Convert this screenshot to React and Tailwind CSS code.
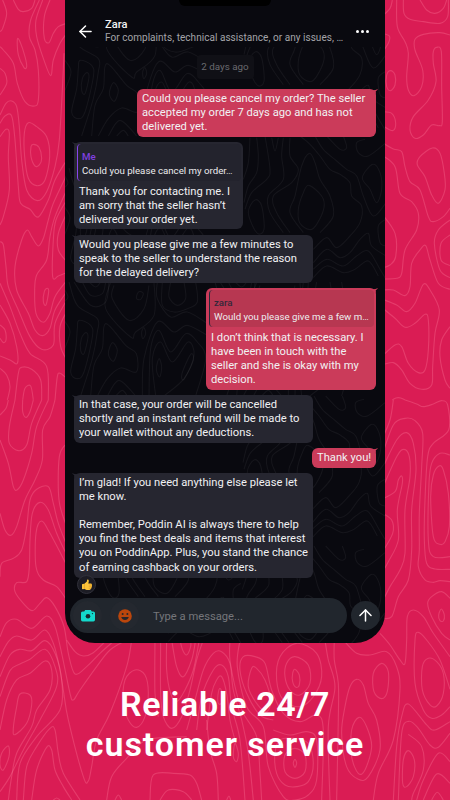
import { ArrowLeft, ArrowUp } from "lucide-react";
import clsx from "clsx";

// Contour lines. Every string is a list of points, a trailing z closes the ring.
const LEFT_TOP = [
  "8,0 20,40 8,85 0,95",
  "40,0 55,28 70,35 95,25 105,0",
  "118,0 92,60 88,110 105,150 115,210 115,300 103,318 75,305 52,250 40,190 10,150 0,140",
  "128,0 108,60 110,110 130,175 152,227 160,180 180,130 200,100",
  "150,0 133,50 133,115 147,128 160,100 175,80 200,70",
  "52,118 60,125 75,170 80,200 72,203 55,165 z",
  "0,205 15,220 20,250 0,285",
  "85,368 110,380 140,410 149,470 135,540 110,557 85,535 74,470 73,400 z",
  "100,433 117,442 125,475 118,495 105,498 93,470 93,440 z",
  "0,345 18,310 35,303 50,320 58,380 65,480 80,570 112,602 140,575 165,500 178,420 188,250 192,160",
  "0,370 15,348 35,348 45,420 55,560 62,610 90,628 115,651 145,600 165,540 200,480",
  "0,410 18,388 28,400 25,470 28,570 10,650 0,675",
  "200,525 160,610 145,660 130,715 115,738 95,710 82,690 65,720 45,800 50,870 85,940 105,990 128,1007 150,985 165,930 200,875",
  "200,570 165,650 150,710 140,780 110,825 104,870 108,940 130,967 150,940 165,890 200,842",
  "200,600 168,660 160,720 158,830 175,828 200,818",
  "200,640 175,700 175,750 200,785",
  "0,725 10,735 18,800 25,860 55,930 90,1010 125,1048 160,1035 165,970 200,900",
  "0,850 30,920 60,1000 90,1060 140,1100 145,1200",
  "0,915 30,970 50,1040 52,1090 30,1080 0,1068",
  "0,975 15,990 18,1020 10,1028 0,1015",
  "142,865 146,875 138,915 130,905 133,875 z",
  "45,1200 55,1120 65,1102 95,1108 122,1140 125,1200",
  "68,1200 75,1165 92,1158 100,1200",
  "0,1105 20,1125 30,1160 22,1200",
  "165,1200 172,1130 180,1120 200,1135",
  "200,935 180,980 182,1040 200,1080",
];

const LEFT_BOTTOM = [
  "0,45 18,25 25,0",
  "45,0 28,80 28,130 55,152 80,135 95,70 125,0",
  "68,0 68,35 78,52 90,35 100,0",
  "0,120 25,190 40,260 52,269 70,240 95,160 110,80 145,0",
  "165,0 150,50 128,90 127,180 105,240 75,300 50,380 33,406 15,390 0,340",
  "0,530 5,490 40,475 65,450 80,380 90,300 110,268 145,260 160,310 175,370 200,435",
  "200,465 170,400 145,330 120,307 97,340 90,420 88,500 80,545 50,548 45,575 70,610 97,632 120,610 140,593 165,620 192,680 205,760 225,822 260,800 300,760 345,720",
  "200,495 150,400 125,363 108,400 108,500 130,540 170,560 200,600",
  "200,130 178,170 177,300 200,380",
  "0,710 20,668 50,658 95,685 140,648 165,680 185,760 210,880 220,900 240,870 290,800 330,750 380,720",
  "0,770 25,725 50,708 95,720 135,690 160,730 178,800 190,870 205,960 250,1130 265,1143 275,1100 290,1020 330,940 380,800 395,720",
  "0,830 30,765 60,748 95,752 135,722 165,760 185,840 180,930 110,1010 60,1090 50,1200",
  "0,890 30,812 60,792 90,778 135,748 165,800 170,860 120,960 70,1050 30,1130 0,1175",
  "0,990 20,900 50,840 90,820 135,783 155,810 150,870 110,930 95,980 50,1060 35,1130 25,1200",
  "60,882 90,885 95,915 80,970 45,1004 40,985 50,920 z",
  "70,1200 80,1100 110,1040 150,985 165,990 175,1060 190,1120 240,1200",
  "95,1200 110,1110 140,1042 155,1050 165,1110 190,1160 215,1200",
  "25,1038 27,1070 10,1110 0,1095 5,1060 z",
];

const RIGHT_TOP = [
  "5,50 30,25 37,0",
  "50,0 52,80 75,125 85,160 80,230 85,270 102,287 125,260 128,210 105,150 105,118 130,103 180,98 210,105",
  "70,0 72,40 90,58 130,65 180,70 203,50 205,0",
  "120,0 140,30 165,40 190,25 200,0",
  "5,100 28,108 25,130 5,160",
  "32,212 45,225 45,255 32,272 20,260 20,225 z",
  "5,335 35,340 47,370 38,392 5,375",
  "170,142 184,155 185,260 187,365 178,377 155,375 130,405 105,415 90,390 100,350 145,300 168,245 160,190 160,155 z",
  "157,444 180,460 193,520 195,570 175,610 155,585 135,530 112,495 120,470 z",
  "5,427 40,447 65,455 75,500 90,545 120,570 145,650 160,665 190,650 210,625",
  "5,465 45,500 60,580 95,605 115,640 110,690 75,750 65,820 50,835 5,837",
  "5,640 45,700 47,770 30,795 5,805",
  "5,870 40,870 75,887 90,860 95,790 120,750 137,737 150,780 175,850 210,868",
  "210,660 175,690 163,730 180,810 210,833",
  "210,705 183,730 183,780 210,797",
  "5,897 50,915 80,935 105,910 130,853 150,870 178,930 165,1000 158,1100 155,1155 125,1168 90,1150 65,1110 40,1088 5,1095",
  "5,922 45,955 75,982 105,970 135,943 145,960 145,1050 135,1110 115,1118 85,1090 65,1040 45,1035 5,1070",
  "210,980 185,1020 180,1070 195,1140 210,1165",
  "37,1200 48,1194 62,1194 75,1200",
];

const RIGHT_BOTTOM = [
  "5,120 30,60 40,0",
  "75,0 110,12 130,20 160,12 185,2 203,15 206,90 160,130 143,170 135,300 133,420 140,490 165,507 210,508",
  "5,170 40,75 75,55 105,62 128,100 125,200 118,340 118,450 115,500 135,540 160,547 180,542 210,545",
  "5,210 50,120 80,98 100,130 108,210 95,330 95,450 85,540 55,590 35,650 5,655",
  "5,270 50,170 72,148 88,170 90,230 75,330 75,460 60,510 30,560 5,610",
  "5,298 45,275 55,240 65,228 67,250 52,330 55,420 25,485 5,520",
  "5,338 35,360 38,400 5,460",
  "210,165 180,160 155,190 147,250 145,420 160,470 210,470",
  "177,198 190,210 205,280 208,380 195,425 180,433 160,410 152,290 160,225 z",
  "210,595 185,575 155,590 143,610 155,650 185,700 210,720",
  "184,627 193,645 190,663 180,662 176,645 z",
  "0,700 30,735 60,780 75,790 80,720 82,650 100,630 130,650 160,700 210,770",
  "210,868 180,780 140,720 115,697 105,720 105,850 130,930 155,955 185,945 210,920",
  "145,775 170,785 190,820 190,880 170,918 150,915 127,870 127,800 z",
  "210,965 165,990 140,975 85,912 65,950 50,1040 40,1200",
  "210,1000 175,1042 150,1035 115,985 87,964 65,1000 55,1200",
  "85,1003 125,1040 130,1110 100,1180 95,1200",
  "85,1052 103,1080 100,1130 80,1160 68,1150 70,1080 z",
  "210,1085 175,1060 130,1140 110,1200",
  "130,1200 170,1122 210,1150",
  "155,1200 172,1177 190,1200",
];

const FOOT = [
  "200,0 225,35 250,48 280,38 320,0",
  "405,90 435,105 445,160 435,230 410,262 385,240 370,190 375,120 z",
  "465,0 465,160 475,230",
  "482,0 482,160 490,230 515,265 545,230 570,150 590,60 610,0",
  "500,0 500,90 512,160 530,185 555,150 580,90 598,0",
  "515,0 530,80 550,110 575,60 587,0",
  "540,0 548,30 560,45 572,20 572,0",
  "560,270 580,200 610,90 640,40 665,35 690,70 700,150 725,240 745,340 760,480",
  "590,270 605,170 640,90 665,75 685,110 695,200 720,300 735,480",
  "620,270 635,160 650,120 665,110 680,160 690,240 705,300",
  "660,145 668,165 664,190 655,190 654,165 z",
  "690,0 690,60 710,160 730,220 770,290 780,400 785,480",
  "720,0 712,80 740,200 790,260 805,380 850,470 885,480 925,465 950,420 950,300 920,275 870,285 820,270",
  "755,85 770,85 795,120 812,180 800,215 770,190 745,140 z",
  "820,240 780,225 740,160 720,90 730,50 765,50 795,70 815,150 850,220 900,245 950,225 970,270 965,480",
  "885,88 898,105 898,135 888,142 878,125 878,100 z",
  "885,50 925,75 930,130 900,165 870,150 855,110 860,70 z",
  "890,10 950,40 965,110 940,170 900,200 850,180 830,120 840,50 z",
  "975,0 985,60 1005,140 985,260 990,480",
  "1003,0 1003,60 1015,130 1015,240 1010,480",
  "885,358 890,370 885,382 880,370 z",
  "885,325 915,345 915,395 885,415 855,395 855,345 z",
  "840,300 825,340 830,400 855,435 890,440 925,425 940,370 925,310 880,295 z",
  "1070,118 1090,135 1105,190 1130,240 1140,330 1105,410 1075,418 1040,380 1025,280 1035,200 1050,140 z",
  "1077,232 1100,260 1115,320 1095,390 1075,400 1055,350 1055,270 z",
  "1145,70 1165,95 1162,155 1145,176 1122,155 1120,100 z",
  "1030,0 1070,40 1110,45 1160,35 1190,80 1200,150 1180,300 1135,400 1120,480",
  "320,480 335,410 380,355 440,300 560,290",
  "450,480 460,405 520,400 570,405 590,430 605,480",
  "480,480 505,450 550,455 575,480",
  "345,480 355,465 365,480",
  "680,480 687,468 692,480",
  "620,240 630,330 650,400 655,480",
  "705,310 715,340 710,365 700,350 z",
  "160,480 170,474 180,480",
];

const CHAT_A = [
  "207,148 245,180 252,215 230,265 210,281 180,262 175,220 190,170 z",
  "45,192 65,210 72,280 50,290 25,230 z",
  "30,5 25,80 10,130",
  "50,5 55,60 50,110 25,150 12,200",
  "75,0 90,100 80,130 35,170 15,220",
  "95,5 105,45 115,5",
  "130,5 125,60 130,130 85,180 90,230 130,290",
  "150,5 150,60 175,100 155,140 100,180 110,230 150,290",
  "190,290 150,230 165,180 185,90 208,52 225,80 240,130 270,180 280,240 240,290",
  "180,0 210,25 240,60 270,100 300,115 330,140 335,180 365,210 360,260 330,300 290,335 260,305 220,340",
  "225,0 250,40 290,75 320,100 350,120 370,180 400,240 438,200",
  "398,85 420,110 425,160 410,200 390,160 367,125 z",
  "375,10 350,20 355,50 385,60 438,20",
  "260,0 300,40 320,35 310,0",
  "438,250 415,270 420,320 438,330",
  "220,380 260,340 300,365 330,350 360,310 385,292 395,330 438,360",
  "220,400 260,370 310,390 350,360 385,345 420,400 438,430",
  "220,425 260,390 310,410 345,400 385,375 415,420",
];

const CHAT_B = [
  "150,10 145,50 195,115 240,80 255,10",
  "228,28 238,35 230,52 218,50 220,35 z",
  "280,0 280,50 320,105 370,90 438,130",
  "320,0 315,45 340,70 365,50 360,0",
  "295,0 295,70 330,90 370,80 400,60 395,0",
  "75,0 95,15 110,0",
  "55,0 80,40 115,35 125,0",
  "30,0 80,70 125,60 135,0",
  "15,0 40,70 100,110 100,150 85,230 50,342",
  "45,115 80,130 85,165 60,270 40,290 20,270 35,200 40,140 z",
  "65,152 72,165 60,215 50,205 52,170 z",
  "145,182 160,205 148,238 133,215 z",
  "80,342 90,250 115,200 125,125 185,190 217,215 217,270 170,258 130,290 100,342",
  "240,137 245,155 236,170 233,150 z",
  "140,0 125,80 200,165 215,150 270,100 270,0",
  "235,342 240,230 280,120 330,150 370,130 430,160",
  "255,342 260,200 285,145 320,210 365,155 400,180 425,230 395,342",
  "275,342 265,230 290,180 325,240 372,180 390,220 360,290 300,342",
  "285,230 293,255 287,285 277,262 z",
  "380,217 388,235 360,292 354,275 z",
  "130,342 165,295 215,342",
  "155,342 175,325 190,342",
  "0,115 18,150 0,205",
  "0,20 12,45 0,60",
];

// Smooth curve through the points (Catmull-Rom to bezier)
function toPath(line) {
  const closed = line.endsWith("z");
  const pts = line
    .replace(" z", "")
    .split(" ")
    .map((p) => p.split(",").map(Number));
  const n = pts.length;
  const at = (i) =>
    closed ? pts[(i + n) % n] : pts[Math.max(0, Math.min(n - 1, i))];

  let d = `M${pts[0]}`;
  for (let i = 0; i < (closed ? n : n - 1); i++) {
    const [a, b, c, e] = [at(i - 1), at(i), at(i + 1), at(i + 2)];
    d += `C${b[0] + (c[0] - a[0]) / 6},${b[1] + (c[1] - a[1]) / 6} `;
    d += `${c[0] - (e[0] - b[0]) / 6},${c[1] - (e[1] - b[1]) / 6} ${c}`;
  }
  return d;
}

function Contours({ lines, x, y }) {
  return (
    <g transform={`translate(${x} ${y}) scale(0.3333)`}>
      {lines.map((line) => (
        <path key={line} d={toPath(line)} />
      ))}
    </g>
  );
}

function PageBackground() {
  return (
    <svg
      className="absolute inset-0"
      width="450"
      height="800"
      fill="none"
      stroke="#ff7d9c"
      strokeOpacity="0.32"
      strokeWidth="3.4"
    >
      <Contours lines={LEFT_TOP} x={0} y={0} />
      <Contours lines={LEFT_BOTTOM} x={0} y={400} />
      <Contours lines={RIGHT_TOP} x={380} y={0} />
      <Contours lines={RIGHT_BOTTOM} x={380} y={400} />
      <Contours lines={FOOT} x={0} y={640} />
    </svg>
  );
}

function ChatBackground() {
  return (
    <svg
      className="absolute inset-0"
      width="320"
      height="643"
      fill="none"
      stroke="#ffffff"
      strokeOpacity="0.05"
      strokeWidth="3.4"
    >
      <Contours lines={CHAT_B} x={0} y={22} />
      <Contours lines={CHAT_A} x={175} y={-12} />
      <Contours lines={CHAT_A} x={175} y={136} />
      <Contours lines={CHAT_B} x={-1} y={168} />
      <Contours lines={CHAT_B} x={-1} y={282} />
      <Contours lines={CHAT_B} x={145} y={282} />
      <Contours lines={CHAT_A} x={174} y={396} />
      <Contours lines={CHAT_A} x={30} y={500} />
      <Contours lines={CHAT_A} x={174} y={546} />
    </svg>
  );
}

function Header() {
  return (
    <header className="relative flex h-[47px] items-start bg-[#09090f] pt-[18px]">
      <div className="absolute left-[114px] top-0 h-1.5 w-[92px] rounded-b-[7px] bg-black" />
      <ArrowLeft className="ml-[10.5px] mt-1 text-white" size={19} strokeWidth={1.9} />
      <div className="ml-[10.5px] w-[242px]">
        <p className="text-[11px] leading-[13px] font-medium tracking-[0.1px] text-[#f3f3f4]">
          Zara
        </p>
        <p className="whitespace-nowrap text-[10px] leading-[13px] tracking-[0.04px] text-[#a4a4a8]">
          For complaints, technical assistance, or any issues, …
        </p>
      </div>
      <div className="ml-[9px] mt-3 flex gap-[2px]">
        <span className="size-[3px] rounded-full bg-white" />
        <span className="size-[3px] rounded-full bg-white" />
        <span className="size-[3px] rounded-full bg-white" />
      </div>
    </header>
  );
}

function Quote({ name, text, mine }) {
  return (
    <div
      className={clsx(
        "mb-[4px] -mt-px -ml-[2px] -mr-[2px] h-[37px] rounded-[4px] border-l pl-[4px] pt-[6px] whitespace-nowrap",
        mine ? "border-[#252a3a] bg-[#b73751]" : "border-[#8844ee] bg-[#23232d]"
      )}
    >
      <p
        className={clsx(
          "text-[9.7px] leading-[14px] font-medium",
          mine ? "text-[#33283a]" : "text-[#8040e0]"
        )}
      >
        {name}
      </p>
      <p className="text-[9.7px] leading-[14px] text-[#ececee]">{text}</p>
    </div>
  );
}

function Bubble({ mine, className, children }) {
  return (
    <div
      className={clsx(
        "relative rounded-[6px] pl-[5px] pr-1 pt-[3px] text-[11.2px] leading-[14.1px] whitespace-pre text-[#f1f1f3]",
        mine ? "self-end bg-[#cb3b5a]" : "self-start bg-[#262630]",
        className
      )}
    >
      <svg
        className={clsx("absolute top-0", mine ? "-right-[2px]" : "-left-[2px] -scale-x-100")}
        width="6"
        height="5"
        viewBox="0 0 6 5"
        fill={mine ? "#cb3b5a" : "#262630"}
      >
        <path d="M0 1.2Q3.5 1.3 6 0Q5.2 1.6 3.8 2.3V5Z" />
      </svg>
      {children}
    </div>
  );
}

function ThumbsUp() {
  return (
    <svg width="12" height="12" viewBox="0 0 12 12">
      <path
        d="M1 5.4Q1 5 1.5 5L3.4 4.8 5.9 2.4 6 .9Q6.3.2 7.1.6 8 1.2 7.8 2.5L7.3 4.4H10.1Q11 4.6 10.8 5.5 11.4 6.2 10.8 7 11.2 7.8 10.5 8.4 10.7 9.3 9.9 9.8 9.7 10.9 8.5 10.9H5.6Q4.4 10.7 3.5 10.1L1.5 10.3Q1 10.2 1 9.6Z"
        fill="#fcc43a"
      />
      <path
        d="M7.8 6H10.6M7.8 7.7H10.5M7.7 9.3H9.9M3.4 5V10"
        stroke="#d98a21"
        strokeWidth="0.5"
        fill="none"
      />
    </svg>
  );
}

function CameraIcon() {
  return (
    <svg width="16" height="14" viewBox="0 0 16 14">
      <path
        d="M5.2 1H10.8L11.8 2.4H13.4Q15 2.4 15 4V10.8Q15 12.4 13.4 12.4H2.6Q1 12.4 1 10.8V4Q1 2.4 2.6 2.4H4.2Z"
        fill="#14d8cc"
      />
      <circle cx="8" cy="7.2" r="2.3" fill="#16282e" />
      <circle cx="12.5" cy="4.6" r="0.7" fill="#16282e" />
    </svg>
  );
}

function SmileIcon() {
  return (
    <svg width="14" height="14" viewBox="0 0 14 14">
      <circle cx="7" cy="7" r="6.8" fill="#bb460c" />
      <circle cx="4.6" cy="5" r="1" fill="#26262b" />
      <circle cx="9.4" cy="5" r="1" fill="#26262b" />
      <path d="M3.2 8H10.8Q9.8 11 7 11T3.2 8Z" fill="#26262b" />
    </svg>
  );
}

function Composer() {
  return (
    <div className="relative flex items-center pl-[5px]">
      <div className="flex h-[35px] w-[277px] items-center rounded-full bg-[#21262d]">
        <span className="ml-[3px] flex size-[29px] items-center justify-center rounded-full bg-[#24282f]">
          <CameraIcon />
        </span>
        <span className="ml-[8px] flex size-[29px] items-center justify-center rounded-full bg-[#24282f]">
          <SmileIcon />
        </span>
        <span className="ml-[14px] pt-[3px] text-[11.2px] text-[#75767b]">
          Type a message...
        </span>
      </div>
      <button className="ml-1 flex size-[29px] items-center justify-center rounded-full bg-[#21262d] text-white">
        <ArrowUp size={19} strokeWidth={1.9} />
      </button>
    </div>
  );
}

function App() {
  return (
    <div className="relative flex h-[800px] w-[450px] flex-col items-center overflow-hidden bg-[#da1c54] font-['Roboto',sans-serif]">
      <PageBackground />

      <main className="relative h-[643px] w-[320px] shrink-0 overflow-hidden rounded-b-[30px] bg-[#09090f]">
        <ChatBackground />
        <Header />

        <div className="relative flex h-[551px] flex-col pl-[9px] pr-[9px] pt-2">
          <div className="h-6 w-[57px] self-center rounded-[4px] bg-[#101016] text-center text-[9.8px] leading-6 text-[#6a6a6f]">
            2 days ago
          </div>
          <Bubble mine className="mt-[10px] h-12 w-[239px]">
            {"Could you please cancel my order? The seller\naccepted my order 7 days ago and has not\ndelivered yet."}
          </Bubble>
          <Bubble className="mt-[5px] h-[87px] w-[169px]">
            <Quote name="Me" text="Could you please cancel my order…" />
            {"Thank you for contacting me. I\nam sorry that the seller hasn’t\ndelivered your order yet."}
          </Bubble>
          <Bubble className="mt-[6px] h-12 w-[239px]">
            {"Would you please give me a few minutes to\nspeak to the seller to understand the reason\nfor the delayed delivery?"}
          </Bubble>
          <Bubble mine className="mt-[5px] h-[102px] w-[170px]">
            <Quote mine name="zara" text="Would you please give me a few m…" />
            {"I don’t think that is necessary. I\nhave been in touch with the\nseller and she is okay with my\ndecision."}
          </Bubble>
          <Bubble className="mt-[5px] h-12 w-[239px]">
            {"In that case, your order will be cancelled\nshortly and an instant refund will be made to\nyour wallet without any deductions."}
          </Bubble>
          <Bubble mine className="mt-[5px] h-5 w-16">
            Thank you!
          </Bubble>
          <Bubble className="mt-[5px] h-[105px] w-[239px]">
            {"I’m glad! If you need anything else please let\nme know.\n\nRemember, Poddin AI is always there to help\nyou find the best deals and items that interest\nyou on PoddinApp. Plus, you stand the chance\nof earning cashback on your orders."}
            <span className="absolute -bottom-4 left-[3px] flex size-[19px] items-center justify-center rounded-full border border-[#30303a] bg-[#1c1c24]">
              <ThumbsUp />
            </span>
          </Bubble>
        </div>

        <Composer />
      </main>

      <h1 className="relative mt-[42px] text-center text-[34px] leading-[39.5px] font-semibold whitespace-nowrap text-white">
        <span className="block tracking-[0.65px]">Reliable 24/7</span>
        <span className="block tracking-[0.95px]">customer service</span>
      </h1>
    </div>
  );
}

export default App;
